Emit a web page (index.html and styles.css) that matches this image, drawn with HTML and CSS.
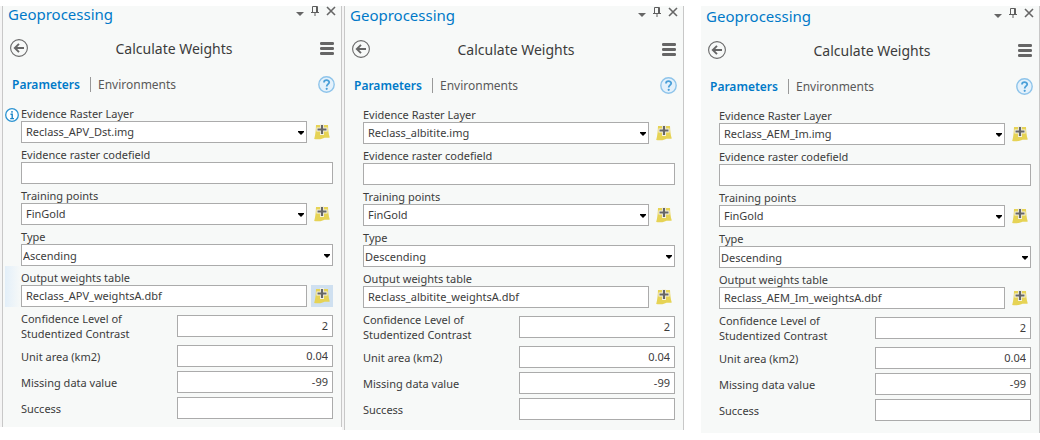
FILE: index.html
```html
<!DOCTYPE html>
<html lang="en">
<head>
<meta charset="utf-8">
<title>Geoprocessing</title>
<link rel="stylesheet" href="styles.css">
</head>
<body>
<svg class="defs" width="0" height="0" aria-hidden="true">
  <symbol id="pin" viewBox="0 0 8 10"><path d="M1.5 6.5V.5h5v6M0 6.5h8M4 7v3" fill="none" stroke="#5e5e5e"/><path d="M5 1h1v5H5z" fill="#5e5e5e"/></symbol>
  <symbol id="close" viewBox="0 0 10 10"><path d="M1 1l8 8M9 1L1 9" stroke="#666" stroke-width="1.6"/></symbol>
  <symbol id="caret" viewBox="0 0 8 4"><path d="M0 0h8L4 4z" fill="#666"/></symbol>
  <symbol id="drop" viewBox="0 0 6 4"><path d="M0 0h6v1L3 4 0 1z" fill="#000"/></symbol>
  <symbol id="back" viewBox="0 0 18 18"><circle cx="9" cy="9" r="8.4" fill="none" stroke="#6a6a6a" stroke-width="1.1"/><path d="M14 9H5M9 4.8L4.8 9 9 13.2" fill="none" stroke="#666" stroke-width="1.9"/></symbol>
  <symbol id="menu" viewBox="0 0 14 13"><path d="M1.3 1.5h11.4M1.3 6.5h11.4M1.3 11.5h11.4" stroke="#666" stroke-width="2.8" stroke-linecap="round"/></symbol>
  <symbol id="help" viewBox="0 0 17 17"><circle cx="8.5" cy="8.5" r="7.7" fill="#e4f1fb" stroke="#8ec4ea" stroke-width="1.4"/><path d="M6 6.4C6 3.5 11.2 3.5 11.2 6.3c0 1.8-2.5 2-2.5 4.2" fill="none" stroke="#4a9fd8" stroke-width="1.8"/><circle cx="8.7" cy="12.8" r="1.1" fill="#4a9fd8"/></symbol>
  <symbol id="info" viewBox="0 0 14 14"><circle cx="7" cy="7" r="6.3" fill="#fff" stroke="#2b93d1" stroke-width="1.3"/><path d="M7 3v1.7M5.5 6.2h1.7v4.3M5.2 10.6h3.8" fill="none" stroke="#1c86c8" stroke-width="1.4"/></symbol>
  <symbol id="add" viewBox="0 0 16 16"><path d="M2 1h12c.2 5 .6 9 1.8 12.6-2.5.6-4.3-.4-6.5.6-2.8 1.2-6 1.4-9.1.9C1.4 11 1.8 6 2 1z" fill="#e6d355"/><path d="M8 0v11M2.5 5.5h11" stroke="#f5f3e4" stroke-width="4"/><path d="M8 1v9M3.5 5.5h9" stroke="#666" stroke-width="2.2"/></symbol>
</svg>
<main class="board">

  <section class="panel panel-first">
    <header class="titlebar"><h2>Geoprocessing</h2>
      <button aria-label="Options"><svg width="8" height="4"><use href="#caret"/></svg></button>
      <button aria-label="Pin"><svg width="8" height="10"><use href="#pin"/></svg></button>
      <button aria-label="Close"><svg width="10" height="10"><use href="#close"/></svg></button></header>
    <div class="toolbar"><button aria-label="Back"><svg width="18" height="18"><use href="#back"/></svg></button><h3>Calculate Weights</h3><button aria-label="Menu"><svg width="14" height="13"><use href="#menu"/></svg></button></div>
    <nav class="tabs"><a class="active" href="#parameters">Parameters</a><a href="#environments">Environments</a><button aria-label="Help"><svg width="17" height="17"><use href="#help"/></svg></button></nav>
    <form class="fields">
      <div class="field"><svg class="info" width="14" height="14"><use href="#info"/></svg><label for="a1">Evidence Raster Layer</label><div class="line"><span class="combo"><select id="a1"><option>Reclass_APV_Dst.img</option></select><svg width="6" height="4"><use href="#drop"/></svg></span><button type="button" class="add" aria-label="Add layer"><svg width="16" height="16"><use href="#add"/></svg></button></div></div>
      <div class="field"><label for="a2">Evidence raster codefield</label><input id="a2" type="text"></div>
      <div class="field"><label for="a3">Training points</label><div class="line"><span class="combo"><select id="a3"><option>FinGold</option></select><svg width="6" height="4"><use href="#drop"/></svg></span><button type="button" class="add" aria-label="Add points"><svg width="16" height="16"><use href="#add"/></svg></button></div></div>
      <div class="field"><label for="a4">Type</label><span class="combo plain"><select id="a4"><option>Ascending</option></select><svg width="6" height="4"><use href="#drop"/></svg></span></div>
      <div class="field modified"><label for="a5">Output weights table</label><div class="line"><input id="a5" type="text" value="Reclass_APV_weightsA.dbf"><button type="button" class="add selected" aria-label="Choose output"><svg width="16" height="16"><use href="#add"/></svg></button></div></div>
      <div class="values">
        <label for="a6">Confidence Level of Studentized Contrast</label><input id="a6" type="text" value="2">
        <label for="a7">Unit area (km2)</label><input id="a7" type="text" value="0.04">
        <label for="a8">Missing data value</label><input id="a8" type="text" value="-99">
        <label for="a9">Success</label><input id="a9" type="text">
      </div>
    </form>
  </section>

  <section class="panel panel-second">
    <header class="titlebar"><h2>Geoprocessing</h2>
      <button aria-label="Options"><svg width="8" height="4"><use href="#caret"/></svg></button>
      <button aria-label="Pin"><svg width="8" height="10"><use href="#pin"/></svg></button>
      <button aria-label="Close"><svg width="10" height="10"><use href="#close"/></svg></button></header>
    <div class="toolbar"><button aria-label="Back"><svg width="18" height="18"><use href="#back"/></svg></button><h3>Calculate Weights</h3><button aria-label="Menu"><svg width="14" height="13"><use href="#menu"/></svg></button></div>
    <nav class="tabs"><a class="active" href="#parameters">Parameters</a><a href="#environments">Environments</a><button aria-label="Help"><svg width="17" height="17"><use href="#help"/></svg></button></nav>
    <form class="fields">
      <div class="field"><label for="b1">Evidence Raster Layer</label><div class="line"><span class="combo"><select id="b1"><option>Reclass_albitite.img</option></select><svg width="6" height="4"><use href="#drop"/></svg></span><button type="button" class="add" aria-label="Add layer"><svg width="16" height="16"><use href="#add"/></svg></button></div></div>
      <div class="field"><label for="b2">Evidence raster codefield</label><input id="b2" type="text"></div>
      <div class="field"><label for="b3">Training points</label><div class="line"><span class="combo"><select id="b3"><option>FinGold</option></select><svg width="6" height="4"><use href="#drop"/></svg></span><button type="button" class="add" aria-label="Add points"><svg width="16" height="16"><use href="#add"/></svg></button></div></div>
      <div class="field"><label for="b4">Type</label><span class="combo plain"><select id="b4"><option>Descending</option></select><svg width="6" height="4"><use href="#drop"/></svg></span></div>
      <div class="field"><label for="b5">Output weights table</label><div class="line"><input id="b5" type="text" value="Reclass_albitite_weightsA.dbf"><button type="button" class="add" aria-label="Choose output"><svg width="16" height="16"><use href="#add"/></svg></button></div></div>
      <div class="values">
        <label for="b6">Confidence Level of Studentized Contrast</label><input id="b6" type="text" value="2">
        <label for="b7">Unit area (km2)</label><input id="b7" type="text" value="0.04">
        <label for="b8">Missing data value</label><input id="b8" type="text" value="-99">
        <label for="b9">Success</label><input id="b9" type="text">
      </div>
    </form>
  </section>

  <section class="panel panel-third">
    <header class="titlebar"><h2>Geoprocessing</h2>
      <button aria-label="Options"><svg width="8" height="4"><use href="#caret"/></svg></button>
      <button aria-label="Pin"><svg width="8" height="10"><use href="#pin"/></svg></button>
      <button aria-label="Close"><svg width="10" height="10"><use href="#close"/></svg></button></header>
    <div class="toolbar"><button aria-label="Back"><svg width="18" height="18"><use href="#back"/></svg></button><h3>Calculate Weights</h3><button aria-label="Menu"><svg width="14" height="13"><use href="#menu"/></svg></button></div>
    <nav class="tabs"><a class="active" href="#parameters">Parameters</a><a href="#environments">Environments</a><button aria-label="Help"><svg width="17" height="17"><use href="#help"/></svg></button></nav>
    <form class="fields">
      <div class="field"><label for="c1">Evidence Raster Layer</label><div class="line"><span class="combo"><select id="c1"><option>Reclass_AEM_Im.img</option></select><svg width="6" height="4"><use href="#drop"/></svg></span><button type="button" class="add" aria-label="Add layer"><svg width="16" height="16"><use href="#add"/></svg></button></div></div>
      <div class="field"><label for="c2">Evidence raster codefield</label><input id="c2" type="text"></div>
      <div class="field"><label for="c3">Training points</label><div class="line"><span class="combo"><select id="c3"><option>FinGold</option></select><svg width="6" height="4"><use href="#drop"/></svg></span><button type="button" class="add" aria-label="Add points"><svg width="16" height="16"><use href="#add"/></svg></button></div></div>
      <div class="field"><label for="c4">Type</label><span class="combo plain"><select id="c4"><option>Descending</option></select><svg width="6" height="4"><use href="#drop"/></svg></span></div>
      <div class="field"><label for="c5">Output weights table</label><div class="line"><input id="c5" type="text" value="Reclass_AEM_Im_weightsA.dbf"><button type="button" class="add" aria-label="Choose output"><svg width="16" height="16"><use href="#add"/></svg></button></div></div>
      <div class="values">
        <label for="c6">Confidence Level of Studentized Contrast</label><input id="c6" type="text" value="2">
        <label for="c7">Unit area (km2)</label><input id="c7" type="text" value="0.04">
        <label for="c8">Missing data value</label><input id="c8" type="text" value="-99">
        <label for="c9">Success</label><input id="c9" type="text">
      </div>
    </form>
  </section>

</main>
</body>
</html>
```

FILE: styles.css
```css
* { box-sizing: border-box; }
body { margin: 0; background: #fff; color: #3c3c3c; font: 11px/15px "Noto Sans", "Open Sans", sans-serif; }
svg { display: block; }
.defs { position: absolute; }
button { padding: 0; border: 0; background: none; font: inherit; }
h2, h3 { margin: 0; font-weight: 400; }

.board { display: flex; align-items: flex-start; padding: 6px 0 0 2px; }
.panel { flex: 1 1 0; min-width: 0; background: #f7f9f8; border: solid #c8c8c8; border-width: 0 1px; }
.panel-first { padding-bottom: 8px; box-shadow: -2px 0 0 #f5f5f5; }
.panel-second { margin-left: 2px; padding: 1px 0 10px; box-shadow: -2px 0 0 #f5f5f5; }
.panel-third { margin-left: 17px; padding: 2px 0 12px; border-left: 0; }

.titlebar { display: flex; align-items: flex-start; height: 18px; padding: 0 5px; }
.titlebar h2 { flex: 1; font-size: 15px; line-height: 16px; color: #0079c8; }
.titlebar button { display: flex; align-items: flex-end; height: 10px; margin-left: 7px; }

.toolbar { display: flex; align-items: center; height: 48px; padding: 0 7px; }
.toolbar h3 { flex: 1; font-size: 14px; line-height: 20px; padding-top: 2px; text-align: center; color: #3c3c3c; }

.tabs { display: flex; align-items: center; height: 24px; padding: 0 6px 0 9px; font-size: 12px; }
.tabs a { color: #5a5a5a; text-decoration: none; }
.tabs .active { padding-right: 10px; margin-right: 7px; border-right: 1px solid #999; color: #0079c8; font-weight: 600; }
.tabs button { margin-left: auto; }

.fields { padding: 6px 8px 0 18px; }
.field { position: relative; }
.field > label { display: block; height: 19px; line-height: 24px; white-space: nowrap; }
.info { position: absolute; left: -16px; top: 6px; }
.modified::before { content: ""; position: absolute; left: -16px; top: 0; bottom: 0; width: 16px; background: linear-gradient(90deg, #e3eff9, #f7f9f8); }

.line { display: flex; gap: 4px; }
input, select { display: block; width: 100%; min-width: 0; height: 22px; margin: 0; padding: 0 4px 2px; border: 1px solid #ababab; border-radius: 0; background: #fff; color: #3c3c3c; font: inherit; appearance: none; }
.combo { position: relative; display: block; flex: 1; min-width: 0; }
.combo svg { position: absolute; right: 3px; top: 10px; pointer-events: none; }
.plain select { padding: 0 1px; }
.add { display: grid; place-items: center; flex: 0 0 22px; height: 22px; }
.selected { background: #cfe0f0; }

.values { display: grid; grid-template-columns: 1fr 1fr; gap: 4px 0; align-items: center; padding-top: 4px; }
.values input { text-align: right; }
.values label { padding-right: 24px; }
```
